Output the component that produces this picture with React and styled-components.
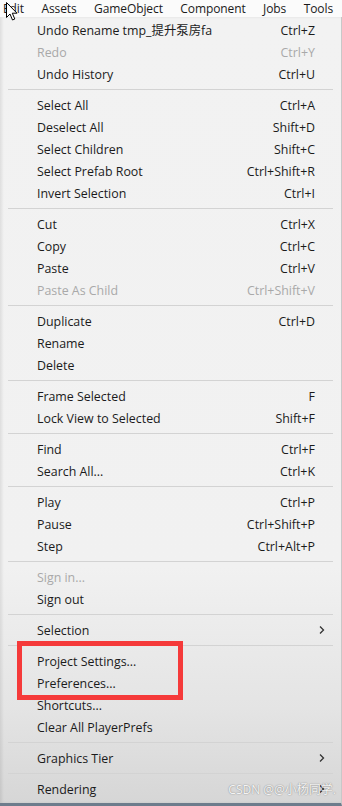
import React from "react";
import styled, { createGlobalStyle } from "styled-components";

const GlobalStyle = createGlobalStyle`
  html, body {
    margin: 0;
    padding: 0;
    background: #f2f2f2;
  }
  body {
    font-family: "Open Sans", "Noto Sans CJK SC", sans-serif;
  }
`;

const groups = [
  [
    { label: "Undo Rename tmp_提升泵房fa", keys: "Ctrl+Z" },
    { label: "Redo", keys: "Ctrl+Y", disabled: true },
    { label: "Undo History", keys: "Ctrl+U" },
  ],
  [
    { label: "Select All", keys: "Ctrl+A" },
    { label: "Deselect All", keys: "Shift+D" },
    { label: "Select Children", keys: "Shift+C" },
    { label: "Select Prefab Root", keys: "Ctrl+Shift+R" },
    { label: "Invert Selection", keys: "Ctrl+I" },
  ],
  [
    { label: "Cut", keys: "Ctrl+X" },
    { label: "Copy", keys: "Ctrl+C" },
    { label: "Paste", keys: "Ctrl+V" },
    { label: "Paste As Child", keys: "Ctrl+Shift+V", disabled: true },
  ],
  [
    { label: "Duplicate", keys: "Ctrl+D" },
    { label: "Rename" },
    { label: "Delete" },
  ],
  [
    { label: "Frame Selected", keys: "F" },
    { label: "Lock View to Selected", keys: "Shift+F" },
  ],
  [
    { label: "Find", keys: "Ctrl+F" },
    { label: "Search All...", keys: "Ctrl+K" },
  ],
  [
    { label: "Play", keys: "Ctrl+P" },
    { label: "Pause", keys: "Ctrl+Shift+P" },
    { label: "Step", keys: "Ctrl+Alt+P" },
  ],
  [
    { label: "Sign in...", disabled: true },
    { label: "Sign out" },
  ],
  [{ label: "Selection", submenu: true }],
  [
    { label: "Project Settings..." },
    { label: "Preferences..." },
    { label: "Shortcuts..." },
    { label: "Clear All PlayerPrefs" },
  ],
  [{ label: "Graphics Tier", submenu: true }],
  [{ label: "Rendering", submenu: true }],
];

const menus = ["Edit", "Assets", "GameObject", "Component", "Jobs", "Tools"];

export default function App() {
  return (
    <>
      <GlobalStyle />
      <Screen>
        <MenuBar>
          {menus.map((m) => (
            <MenuTitle key={m}>{m}</MenuTitle>
          ))}
        </MenuBar>
        <Dropdown>
          {groups.map((group, gi) => (
            <React.Fragment key={gi}>
              {gi > 0 && <Separator />}
              {group.map((item) => (
                <Row key={item.label} $disabled={item.disabled}>
                  <Label>{item.label}</Label>
                  {item.keys && <Keys>{item.keys}</Keys>}
                  {item.submenu && (
                    <Chevron viewBox="0 0 8 10">
                      <path d="M2 1.5 L5.5 5 L2 8.5" />
                    </Chevron>
                  )}
                </Row>
              ))}
            </React.Fragment>
          ))}
        </Dropdown>
        <Highlight />
        <Watermark>CSDN @@小杨同学.</Watermark>
        <Cursor viewBox="0 0 12 19">
          <path d="M0.5 0.5 L0.5 15.5 L4 12 L6.5 18 L8.8 17 L6.3 11.2 L11 11.2 Z" />
        </Cursor>
      </Screen>
    </>
  );
}

const Screen = styled.div`
  position: relative;
  width: 342px;
  height: 806px;
  overflow: hidden;
  background: #fafafa;
  display: flex;
  flex-direction: column;
`;

const MenuBar = styled.div`
  height: 17px;
  display: flex;
  align-items: center;
  gap: 17.5px;
  padding-left: 3px;
  background: #fbfbfb;
  white-space: nowrap;
`;

const MenuTitle = styled.span`
  font-size: 12px;
  letter-spacing: -0.1px;
  color: #1a1a1a;
  line-height: 17px;
`;

const Dropdown = styled.div`
  flex: 1;
  display: flex;
  flex-direction: column;
  padding-top: 2px;
  border-right: 1px solid #c8c8c8;
  border-bottom: 3px solid #6d7c8c;
  background: linear-gradient(
    to bottom,
    #f2f2f2 0%,
    #f1f1f1 70%,
    #e4e4e4 88%,
    #d6d6d6 100%
  );
  box-shadow: inset 2px 0 3px rgba(0, 0, 0, 0.08);
`;

const Row = styled.div`
  height: 22px;
  flex-shrink: 0;
  display: flex;
  align-items: center;
  padding: 0 26px 0 37px;
  font-size: 12.4px;
  color: ${(p) => (p.$disabled ? "#a9a9a9" : "#1b1b1b")};
  position: relative;
`;

const Label = styled.span`
  flex: 1;
  white-space: nowrap;
`;

const Keys = styled.span`
  white-space: nowrap;
`;

const Chevron = styled.svg`
  position: absolute;
  right: 15px;
  top: 6px;
  width: 8px;
  height: 10px;
  fill: none;
  stroke: #333;
  stroke-width: 1.3;
`;

const Separator = styled.div`
  height: 9px;
  flex-shrink: 0;
  display: flex;
  align-items: center;
  padding: 0 8px;

  &::after {
    content: "";
    flex: 1;
    height: 1px;
    background: #d3d3d3;
  }
`;

const Highlight = styled.div`
  position: absolute;
  left: 17px;
  top: 641px;
  width: 166px;
  height: 59px;
  box-sizing: border-box;
  border: 5px solid #f53a3a;
  pointer-events: none;
`;

const Watermark = styled.span`
  position: absolute;
  right: 6px;
  bottom: 8px;
  font-size: 12px;
  color: rgba(255, 255, 255, 0.92);
  text-shadow: 0 0 1px rgba(0, 0, 0, 0.35), 0 0 2px rgba(0, 0, 0, 0.2);
  font-family: "Open Sans", "Noto Sans CJK SC", sans-serif;
`;

const Cursor = styled.svg`
  position: absolute;
  left: 6px;
  top: 2px;
  width: 12px;
  height: 19px;
  fill: #fff;
  stroke: #000;
  stroke-width: 1;
`;
